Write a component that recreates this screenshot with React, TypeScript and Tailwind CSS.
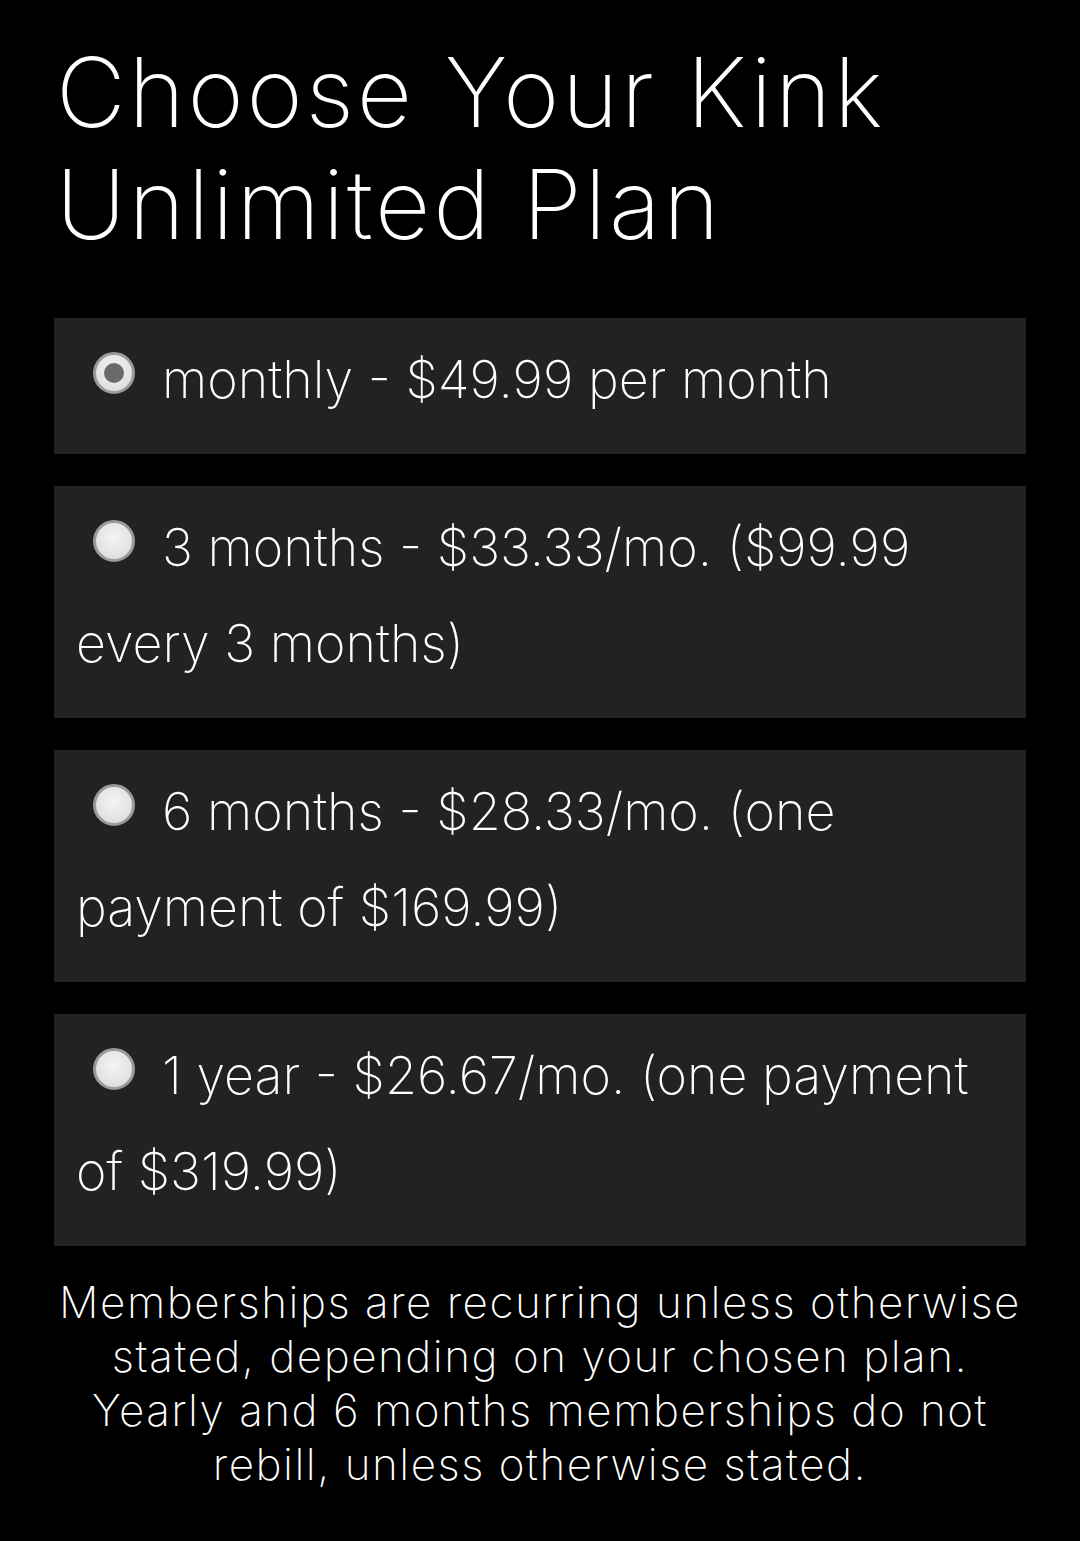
import React from "react";

type Plan = {
  id: string;
  first: string;
  rest?: string;
};

const plans: Plan[] = [
  { id: "monthly", first: "monthly - $49.99 per month" },
  { id: "3m", first: "3 months - $33.33/mo. ($99.99", rest: "every 3 months)" },
  { id: "6m", first: "6 months - $28.33/mo. (one", rest: "payment of $169.99)" },
  { id: "1y", first: "1 year - $26.67/mo. (one payment", rest: "of $319.99)" },
];

function Radio({ checked }: { checked: boolean }) {
  return (
    <span className="relative mb-[4px] ml-[17px] mr-[27px] inline-block h-[42px] w-[42px] rounded-full border-[3px] border-[#9a9a9a] bg-[radial-gradient(circle_at_50%_40%,#f4f4f4,#d8d8d8)] align-baseline">
      {checked && (
        <span className="absolute left-1/2 top-1/2 h-[20px] w-[20px] -translate-x-1/2 -translate-y-1/2 rounded-full bg-[#6a6a6a]" />
      )}
    </span>
  );
}

export default function App() {
  const selected = "monthly";

  return (
    <div className="min-h-screen bg-black px-[54px] pt-[36px] pb-[40px] text-white font-['Inter','Open_Sans',sans-serif] font-[250]">
      <h1 className="pl-[2px] text-[96px] leading-[112px] font-[250] tracking-[2.8px]">
        Choose Your Kink
        <br />
        Unlimited Plan
      </h1>

      <div className="mt-[58px] flex flex-col gap-[32px]">
        {plans.map((p) => (
          <label
            key={p.id}
            className="block bg-[#222222] pl-[22px] pr-[20px] pt-[14px] pb-[26px] text-[52px] leading-[96px] tracking-[0px]"
          >
            <Radio checked={p.id === selected} />
            {p.first}
            {p.rest && (
              <>
                <br />
                {p.rest}
              </>
            )}
          </label>
        ))}
      </div>

      <p className="mt-[29px] text-center text-[44px] leading-[54px] tracking-[1.5px]">
        Memberships are recurring unless otherwise
        <br />
        stated, depending on your chosen plan.
        <br />
        Yearly and 6 months memberships do not
        <br />
        rebill, unless otherwise stated.
      </p>
    </div>
  );
}
